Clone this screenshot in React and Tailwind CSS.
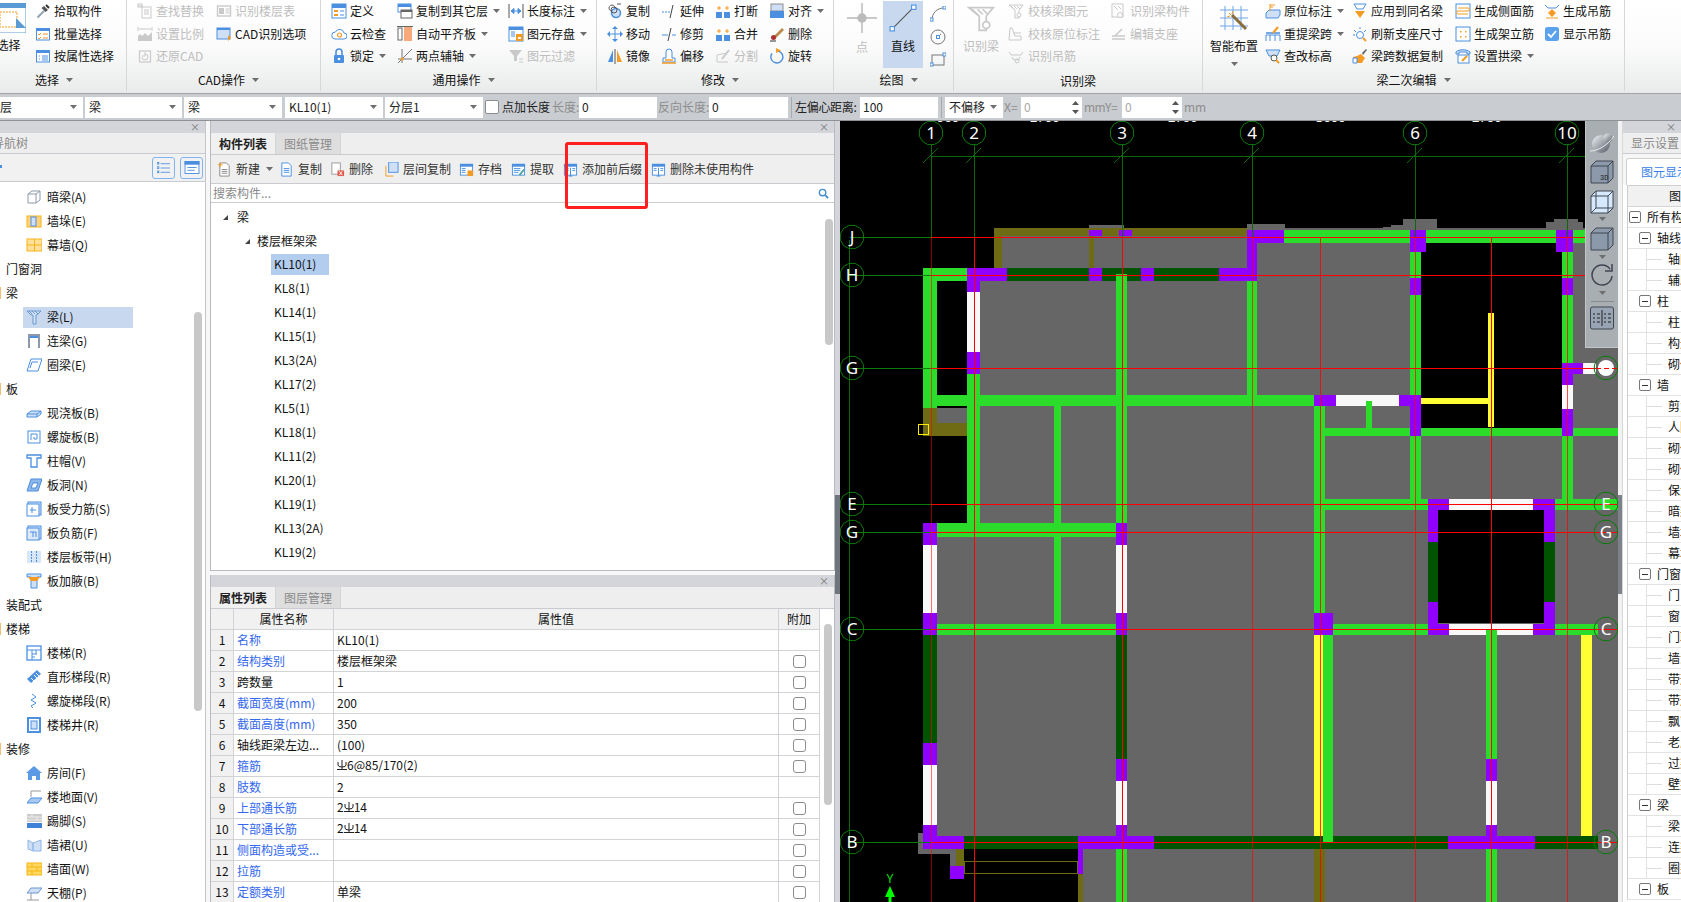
import React from "react";

const B = "#4a8fe0", OR = "#f59a23", GY = "#8c8c8c", DS = "#c9c9c9";
const winIcon = (extra, c = B) => (
  <>
    <rect x="1.5" y="2.5" width="13" height="11.5" fill="#fff" stroke={c} />
    <rect x="1" y="2" width="14" height="3" fill={c} />
    {extra}
  </>
);
const I = {
  pick: <><path d="M2.5 14.5L9 8" stroke="#8fa3b5" strokeWidth="2" /><path d="M9 3l4 4-2.5 2-4-4z" fill="#555" /><path d="M11 2l3 3" stroke="#333" strokeWidth="2" /></>,
  batch: winIcon(<path d="M3 8l1 1 2-2M3 12l1 1 2-2M8 8h5M8 12h5" stroke={OR} fill="none" />, B),
  attr: winIcon(<path d="M4 8h1M4 11h1M7 8h6M7 10h6M7 12h6" stroke={B} />),
  find: <><rect x="5" y="4" width="9" height="11" fill="none" stroke={DS} /><path d="M7 7h5M7 9h5M7 11h5M1 3h5" stroke={DS} /><rect x="1" y="1" width="4" height="3" fill="none" stroke={DS} /></>,
  floorT: <><rect x="1.5" y="3" width="13" height="10" fill="none" stroke={DS} strokeWidth="1.4" /><rect x="3" y="5" width="5" height="6" fill={DS} /><path d="M9.5 6h4M9.5 8h4M9.5 10h4" stroke={DS} /></>,
  scale: <><path d="M1 15h14V6L11 10 8 7l-3 3-2-2-2 2z" fill={DS} /><path d="M2 3h12M1 1v4M15 1v4" stroke={DS} /></>,
  cadopt: <><rect x="1" y="2" width="13" height="11" fill="#cfe0f6" stroke={B} /><rect x="1" y="2" width="13" height="2" fill={B} /><path d="M12 9l3 3-3 3z" fill={OR} /></>,
  restore: <><rect x="2.5" y="3" width="11" height="11" fill="none" stroke={DS} strokeWidth="1.2" /><path d="M5 9a3 3 0 1 0 3-3M8 4v4H5" stroke={DS} fill="none" /></>,
  define: <><rect x="1" y="1" width="14" height="14" fill="#fff" stroke={B} /><rect x="1" y="1" width="14" height="4" fill={B} /><rect x="3" y="7" width="4" height="2" fill={OR} /><rect x="3" y="11" width="4" height="2" fill={OR} /><path d="M9 8h4M9 12h4" stroke={B} /></>,
  cloud: <><path d="M4 13h9a3 3 0 0 0 0-6 4.500 4.500 0 0 0-8.500-1A3.500 3.500 0 0 0 4 13z" fill="#fff" stroke={B} /><circle cx="8.500" cy="9" r="2" fill="none" stroke={OR} strokeWidth="1.2" /></>,
  lock: <><rect x="3" y="7" width="10" height="8" rx="1" fill={B} /><path d="M5 7V4a3 3 0 0 1 6 0v3" stroke={B} strokeWidth="1.6" fill="none" /><circle cx="8" cy="11" r="1.300" fill="#fff" /></>,
  copyF: <><rect x="1" y="1" width="13" height="8" fill="#fff" stroke={B} /><rect x="1" y="1" width="13" height="3" fill={B} /><rect x="4" y="7" width="11" height="8" fill="#fff" stroke="#666" /><rect x="4" y="7" width="11" height="2" fill="#666" /></>,
  align: <><rect x="1" y="2" width="4" height="12" fill="#fff" stroke="#666" /><rect x="7" y="1" width="8" height="14" fill="#f7a97a" /><path d="M0 .5h16" stroke="#666" /></>,
  two: <><path d="M1 11h14M5 1v14M1 15L15 1" stroke="#777" /><circle cx="5" cy="11" r="1.500" fill={OR} /></>,
  len: <><path d="M1 1v14M15 1v14" stroke="#555" /><path d="M3 8h10M3 8l3-2.500v5zM13 8l-3-2.500v5z" fill={B} stroke={B} /></>,
  save: <><rect x="1" y="1" width="14" height="14" fill="#fff" stroke={B} /><rect x="1" y="1" width="14" height="3" fill={B} /><path d="M3 6h4M3 8h4M3 10h4" stroke={B} /><rect x="8" y="8" width="7" height="7" fill={OR} /><rect x="10" y="11" width="3" height="2" fill="#fff" /></>,
  filter: <><path d="M1 2h13L9 8v5H6V8z" fill={DS} /><path d="M11 11h4M11 14h4" stroke={DS} /></>,
  rcopy: <><path d="M2 5a3 3 0 1 1 0 .1M10 1h4" stroke="#555" fill="none" /><circle cx="9" cy="10" r="4.500" fill="#cfe0f6" stroke={B} strokeWidth="1.500" /><circle cx="7" cy="7" r="3" fill="none" stroke="#555" /></>,
  move: <><path d="M8 1v14M1 8h14" stroke={B} /><path d="M8 0l3 3H5zM8 16l3-3H5zM0 8l3-3v6zM16 8l-3-3v6z" fill={B} /></>,
  mirror: <><path d="M1 14L6 2v12z" fill={B} /><path d="M8 1v15" stroke="#555" /><path d="M10 2l5 12h-5z" fill={OR} /></>,
  extend: <><path d="M1 9h9" stroke={B} strokeDasharray="2 1" /><path d="M12 2L9 15" stroke="#444" /></>,
  trim: <><path d="M1 9h6M11 9h4" stroke={B} /><path d="M10 2L7 15" stroke="#444" /></>,
  offset: <><path d="M2 14v-4h3V4a3 3 0 0 1 6 0v6h3v4z" fill="#fff" stroke={B} /><path d="M1 15h14M4 12h8" stroke={OR} strokeWidth="1.300" /></>,
  brk: <><rect x="1" y="9" width="6" height="6" fill={B} /><rect x="9" y="9" width="6" height="6" fill={B} /><path d="M4 3v4M2 5h4M12 3v4M10 5h4" stroke={OR} /></>,
  split: <><path d="M2 14h11M2 14V7l10-2" stroke={DS} fill="none" /><path d="M7 11L14 2" stroke={DS} strokeWidth="2" /></>,
  alignB: <><rect x="2" y="1" width="12" height="7" fill="#cfe0f6" stroke={GY} /><rect x="1" y="8" width="14" height="7" fill={B} /></>,
  del: <><path d="M1 15h6" stroke="#333" /><path d="M4 11L13 2l2 2-9 9z" fill="#b98a4a" /><circle cx="4.500" cy="11.500" r="2.500" fill="#a33" /></>,
  rot: <><path d="M8 3a6 6 0 1 1-5 2.500" stroke={B} fill="none" strokeWidth="1.400" /><path d="M7 0l5 2.500-5 2.500z" fill={OR} /></>,
  dot: <><path d="M0 8h16M8 0v16" stroke={DS} /><circle cx="8" cy="8" r="2.500" fill="#bbb" /></>,
  arc: <><path d="M2 14C2 7 7 2 14 2" stroke="#777" fill="none" /><rect x="0" y="12" width="3" height="3" fill="#fff" stroke={B} /><rect x="13" y="0" width="3" height="3" fill="#fff" stroke={B} /></>,
  circ: <><circle cx="8" cy="8" r="7" fill="none" stroke="#777" /><path d="M8 8L11 5" stroke="#777" /><rect x="6.500" y="6.500" width="3" height="3" fill="#fff" stroke={B} /></>,
  rect: <><rect x="2" y="3" width="12" height="10" fill="none" stroke="#777" /><rect x="0" y="11" width="3" height="3" fill="#fff" stroke={B} /><rect x="13" y="1" width="3" height="3" fill="#fff" stroke={B} /></>,
  ck1: <><path d="M1 2h14l-4 5v8H7V7z" fill="none" stroke={DS} /><path d="M3 3l3 3M6 3l3 3M9 3l3 3" stroke={DS} /><circle cx="11" cy="12" r="2" fill="#fff" stroke={DS} /></>,
  ck2: <><path d="M1 14h12v-4H7L4 2H2z" fill="none" stroke={DS} /><path d="M5 7h8" stroke={DS} /></>,
  ck3: <><path d="M1 4l2 3h10l2-3M4 9a4 3 0 0 0 8 0" stroke={DS} fill="none" /><circle cx="9" cy="13" r="2" fill="none" stroke={DS} /></>,
  ck4: <><rect x="2" y="1" width="11" height="13" fill="none" stroke={DS} /><path d="M4 3l4 4M8 3l3 3" stroke={DS} /><circle cx="10" cy="12" r="2.500" fill="#fff" stroke={DS} /></>,
  ck5: <><path d="M2 10h13M2 13h13M5 10L12 3" stroke={DS} strokeWidth="1.500" /></>,
  orig: <><path d="M1 10l3-3h11v5l-2 3H1z" fill="#cfe0f6" stroke={B} /><path d="M5 1v7M5 2h5M5 4h3" stroke={OR} /></>,
  reDraw: <><path d="M1 15V9h14v6M5 9v6M10 9v6" fill="none" stroke={B} /><path d="M1 7h14" stroke={B} strokeWidth="1.500" /><path d="M8 7l5-6" stroke={OR} strokeWidth="2" /></>,
  chk: <><path d="M1 2h14l-3 6H4z" fill="#cfe0f6" stroke={B} /><circle cx="9" cy="10" r="3" fill="#fff" stroke="#555" /><path d="M11 12l3 3" stroke={OR} strokeWidth="2" /></>,
  apply: <><path d="M2 1h12l-3 5H5z" fill="none" stroke={B} /><path d="M3 8h10l-5 7z" fill={OR} /></>,
  refresh: <><circle cx="8" cy="9" r="3.500" fill="#fff" stroke={B} /><path d="M8 1v2M2 4l2 2M14 4l-2 2M1 9h2" stroke={B} /><path d="M11 12l3 3" stroke={OR} strokeWidth="2" /></>,
  brush: <><path d="M1 15V9l4-1 4-2 4 4-2 3-1 2z" fill={OR} /><path d="M10 5l4-4 1 1-4 5" fill="#666" /><path d="M1 10h4v5H1z" fill="#fff" stroke={B} /></>,
  sideB: <><rect x="1" y="1" width="14" height="14" fill="#fff" stroke={B} /><path d="M3 5h10a1.500 1.500 0 0 1 0 3H3a1.500 1.500 0 0 0 0 3h10" stroke={OR} fill="none" /></>,
  standB: <><rect x="1" y="1" width="14" height="14" fill="#fff" stroke={B} /><path d="M5 5h1.500v1.500H5zM10 5h1.500v1.500H10zM5 10h1.500v1.500H5zM10 10h1.500v1.500H10z" fill={OR} /></>,
  arch: <><path d="M1 4c3-3 11-3 14 0v2h-3V4H4v2H1z" fill="#cfe0f6" stroke={B} /><rect x="3" y="7" width="11" height="8" fill="#fff" stroke={B} /><path d="M7 13l5-5" stroke={OR} strokeWidth="2" /></>,
  hang: <><path d="M1 2l3 3h8l3-3" stroke={B} fill="none" /><path d="M8 6l4 4-4 4-4-4z" fill={OR} /><path d="M2 15h12" stroke={OR} /></>,
  show: <><rect x="1" y="1" width="14" height="14" rx="2.500" fill="#5aa2ee" /><path d="M4 8l3 3 5-6" stroke="#fff" strokeWidth="1.800" fill="none" /></>,
  newI: <><path d="M3 1h7l3 3v11H3z" fill="#fff" stroke="#888" /><path d="M1 3h5M3.500 .5v5" stroke={OR} /><path d="M5 8h6M5 10h6M5 12h6" stroke="#888" /></>,
  copyI: <><path d="M3 1h7l3 3v11H3z" fill="#fff" stroke={B} /><path d="M5 7h6M5 9h6M5 11h6" stroke={B} /></>,
  delI: <><rect x="2" y="1" width="9" height="12" fill="#fff" stroke="#999" /><rect x="8" y="9" width="7" height="6" fill="#e05a4a" /><path d="M10 10l3 4M13 10l-3 4" stroke="#fff" /></>,
  floorC: <><rect x="5" y="0" width="10" height="11" fill="#cfe0f6" stroke={B} /><path d="M2 4v11h8" stroke={OR} fill="none" /></>,
  store: winIcon(<><path d="M3 7h4M3 9h4M3 11h4" stroke={B} /><rect x="9" y="9" width="6" height="6" fill={OR} /></>),
  get: winIcon(<><path d="M3 7h7M3 9h7M3 11h5" stroke={B} /><path d="M9 14l5-6" stroke="#4aa3a3" strokeWidth="2" /></>),
  prefix: winIcon(<><path d="M3 7h3M3 9h3M10 7h3M10 9h3M8 6v9M6 15h4" stroke={B} /></>),
  beamA: <><path d="M2 5l4-3h8v9l-4 3H2z" fill="#fff" stroke="#8c99ab" /><path d="M2 5h8v9M10 5l4-3" stroke="#8c99ab" fill="none" /></>,
  pier: <><rect x="1" y="3" width="14" height="11" fill="#ffd27a" stroke="#f7b416" /><rect x="5" y="4" width="5" height="9" fill="#cfe0f6" stroke={B} /></>,
  curt: <><rect x="1" y="2" width="15" height="12" fill="#ffe09a" stroke="#f7b416" /><path d="M8.500 2v12M1 8h15" stroke="#f7b416" /></>,
  beam: <><path d="M1 2h14l-4 4h-1v9H7V6H5z" fill="#d3e3f7" stroke="#6a97cf" /><path d="M3 2l3 3M6 2l3 3M9 2l3 3" stroke="#6a97cf" /></>,
  lian: <><path d="M3 15V2h10v13" stroke="#8c99ab" strokeWidth="2" fill="none" /><rect x="4" y="3" width="8" height="2" fill={B} /></>,
  ring: <><path d="M1 14L5 2h11l-4 12z" fill="#fff" stroke={B} /><path d="M4 11L6 5h6" stroke={B} fill="none" /></>,
  slab: <><path d="M1 9l4-3h10v3l-4 3H1z" fill="#cfe0f6" stroke={B} /><path d="M1 9h10v3M11 9l4-3" stroke={B} fill="none" /></>,
  spiral: <><rect x="2" y="2" width="12" height="12" fill="none" stroke={B} /><path d="M5 11V5h6v5H8V8" stroke={B} fill="none" /></>,
  cap: <><path d="M1 2h14v3h-4v9H5V5H1z" fill="#fff" stroke={B} strokeWidth="1.300" /></>,
  hole: <><path d="M1 14L5 2h11l-4 12z" fill="#8fb6e8" stroke={B} /><path d="M5 11l2-5h5l-2 5z" fill="#fff" stroke={B} /></>,
  reb: <><rect x="2" y="1" width="13" height="13" fill="#cfe0f6" stroke={B} /><rect x="1" y="3" width="12" height="12" fill="#fff" stroke={B} /><path d="M4 9h6M6 6v6" stroke={B} /></>,
  neg: <><rect x="2" y="1" width="13" height="13" fill="#cfe0f6" stroke={B} /><rect x="1" y="3" width="12" height="12" fill="#dce9f9" stroke={B} /><path d="M4 7h3v5M7 7h3v5" stroke={B} fill="none" /></>,
  band: <><rect x="1" y="2" width="14" height="12" fill="#d7e6f8" /><path d="M5.500 2v12M10.500 2v12" stroke={B} strokeDasharray="2 1" /></>,
  haunch: <><path d="M1 1h14v3h-4v11H5V4H1z" fill="#cfe0f6" stroke={B} /><path d="M2 4h12l-3 4H5z" fill={OR} /></>,
  stair: <><rect x="1" y="1" width="14" height="14" fill="#fff" stroke={B} strokeWidth="1.300" /><path d="M1 5h14M6 5v10M6 9h5M6 12h3M10 5v4" stroke={B} /></>,
  run: <><path d="M1 10L11 1l4 4-10 9z" fill={B} /><path d="M5 9l3 3M8 6l3 3M10 4l3 3" stroke="#fff" /></>,
  helix: <><path d="M6 1l4 3-5 3 5 3-5 3 2 2" stroke={B} fill="none" /></>,
  well: <><rect x="2" y="1" width="12" height="14" fill="#fff" stroke={B} strokeWidth="2" /><rect x="5" y="4" width="6" height="8" fill="#cfe0f6" stroke={B} /></>,
  room: <><path d="M8 1L0 8h2v7h4v-4h4v4h4V8h2z" fill="#5d9ae6" /></>,
  ground: <><path d="M5 8V2h10" stroke="#999" fill="none" /><path d="M1 14l4-5h11l-4 5z" fill="#a9c9f2" stroke={B} /></>,
  skirt: <><rect x="1" y="1" width="15" height="8" fill="#ccc" /><path d="M1 4h15M1 7h15M6 1v3M11 4v3" stroke="#eee" /><rect x="1" y="10" width="15" height="5" fill="#3f82d8" /></>,
  dado: <><path d="M2 3l5 3v8l-5-2zM7 6l8-3v11l-8 0z" fill="#cfe0f6" stroke="#8fb6e8" /></>,
  face: <><rect x="1" y="2" width="15" height="12" fill="#ffd85f" stroke="#f7b416" /><path d="M1 6h15M1 10h15M6 2v4M11 6v4M6 10v4" stroke="#f7b416" /></>,
  ceil: <><path d="M1 8l4-5h11l-4 5z" fill="#cfe0f6" stroke="#6a97cf" /><path d="M5 8v7M1 15h12" stroke="#999" /></>,
};
const Ico = ({ n, cls = "w-[16px] h-[16px]" }) => (
  <svg viewBox="0 0 16 16" className={"shrink-0 " + cls}>{I[n]}</svg>
);
const Tri = () => (
  <svg viewBox="0 0 7 4" className="w-[7px] h-[4px] shrink-0"><path d="M0 0h7L3.500 4z" fill="#6e6e6e" /></svg>
);

const RItem = ({ i, t, arrow, off, gap = "w-[3px]" }) => (
  <div className={"flex items-center h-[22.5px] whitespace-nowrap " + (off ? "text-[#bdbdbd]" : "text-[#111]")}>
    <Ico n={i} />
    <span className={"shrink-0 " + gap} />
    <span>{t}</span>
    {arrow && <span className="ml-[5px]"><Tri /></span>}
  </div>
);
const Col = ({ w, items }) => (
  <div className={"flex flex-col " + w}>
    {items.map((x) => <RItem key={x.t} {...x} />)}
  </div>
);
const Group = ({ w, label, noArrow, children, cls = "", lab = "" }) => (
  <div className={"shrink-0 flex flex-col h-[91px] border-r border-[#d6d8d8] " + w + " " + cls}>
    <div className="flex h-[68px] items-start">{children}</div>
    <div className={"flex-1 flex items-center justify-center gap-[7px] text-[#111] " + lab}>
      <span>{label}</span>
      {!noArrow && <Tri />}
    </div>
  </div>
);

const Ribbon = () => (
  <div className="h-[93px] shrink-0 flex bg-linear-to-b from-white via-[#fbfbfb] to-[#e9ebeb] overflow-hidden">
    <Group w="w-[145px]" cls="-ml-[18px]" label="选择">
      <div className="w-[53px] flex flex-col items-center">
        <svg viewBox="0 0 30 30" className="w-[30px] h-[30px] mt-[3px] ml-[5px]">
          <rect x="0" y="0" width="30" height="30" fill="#fff" stroke="#5b9bd5" />
          <rect x="0" y="0" width="30" height="5" fill="#5b9bd5" />
          <rect x="4" y="9" width="17" height="15" fill="none" stroke={OR} strokeDasharray="2 1" />
          <path d="M20 15l10 10H20z" fill="#5b9bd5" />
        </svg>
        <span className="mt-[4px] text-[#111]">选择</span>
      </div>
      <Col w="w-[90px]" items={[{ i: "pick", t: "拾取构件" }, { i: "batch", t: "批量选择" }, { i: "attr", t: "按属性选择" }]} />
    </Group>
    <Group w="w-[194px]" cls="pl-[10px]" label="CAD操作">
      <Col w="w-[79px]" items={[{ i: "find", t: "查找替换", off: 1 }, { i: "scale", t: "设置比例", off: 1 }, { i: "restore", t: "还原CAD", off: 1 }]} />
      <Col w="w-[95px]" items={[{ i: "floorT", t: "识别楼层表", off: 1 }, { i: "cadopt", t: "CAD识别选项" }]} />
    </Group>
    <Group w="w-[276px]" cls="pl-[10px]" label="通用操作">
      <Col w="w-[66px]" items={[{ i: "define", t: "定义" }, { i: "cloud", t: "云检查" }, { i: "lock", t: "锁定", arrow: 1 }]} />
      <Col w="w-[111px]" items={[{ i: "copyF", t: "复制到其它层", arrow: 1 }, { i: "align", t: "自动平齐板", arrow: 1 }, { i: "two", t: "两点辅轴", arrow: 1 }]} />
      <Col w="w-[80px]" items={[{ i: "len", t: "长度标注", arrow: 1 }, { i: "save", t: "图元存盘", arrow: 1 }, { i: "filter", t: "图元过滤", off: 1 }]} />
    </Group>
    <Group w="w-[237px]" cls="pl-[10px]" label="修改">
      <Col w="w-[54px]" items={[{ i: "rcopy", t: "复制" }, { i: "move", t: "移动" }, { i: "mirror", t: "镜像" }]} />
      <Col w="w-[54px]" items={[{ i: "extend", t: "延伸" }, { i: "trim", t: "修剪" }, { i: "offset", t: "偏移" }]} />
      <Col w="w-[54px]" items={[{ i: "brk", t: "打断" }, { i: "brk", t: "合并" }, { i: "split", t: "分割", off: 1 }]} />
      <Col w="w-[60px]" items={[{ i: "alignB", t: "对齐", arrow: 1 }, { i: "del", t: "删除" }, { i: "rot", t: "旋转" }]} />
    </Group>
    <Group w="w-[120px]" cls="pl-[10px]" label="绘图">
      <div className="w-[36px] flex flex-col items-center text-[#bdbdbd]">
        <Ico n="dot" cls="w-[30px] h-[30px] mt-[3px]" />
        <span className="mt-[6px]">点</span>
      </div>
      <div className="w-[40px] h-[67px] mt-[1px] ml-[3px] bg-[#c7d8ef] flex flex-col items-center">
        <svg viewBox="0 0 26 26" className="w-[28px] h-[28px] mt-[3px]">
          <path d="M3 23L23 3" stroke="#555" />
          <rect x="1" y="21" width="4" height="4" fill="#fff" stroke={B} />
          <rect x="21" y="1" width="4" height="4" fill="#fff" stroke={B} />
        </svg>
        <span className="mt-[6px] text-[#111]">直线</span>
      </div>
      <div className="ml-[7px] flex flex-col pt-[2px]">
        <div className="h-[23px] flex items-center"><Ico n="arc" /></div>
        <div className="h-[23px] flex items-center"><Ico n="circ" /></div>
        <div className="h-[23px] flex items-center"><Ico n="rect" /></div>
      </div>
    </Group>
    <Group w="w-[249px]" label="识别梁" noArrow lab="pt-[3px]">
      <div className="w-[54px] flex flex-col items-center text-[#bdbdbd]">
        <Ico n="ck1" cls="w-[28px] h-[28px] mt-[4px]" />
        <span className="mt-[6px]">识别梁</span>
      </div>
      <Col w="w-[102px]" items={[{ i: "ck1", t: "校核梁图元", off: 1, gap: "w-[4px]" }, { i: "ck2", t: "校核原位标注", off: 1, gap: "w-[4px]" }, { i: "ck3", t: "识别吊筋", off: 1, gap: "w-[4px]" }]} />
      <Col w="w-[90px]" items={[{ i: "ck4", t: "识别梁构件", off: 1, gap: "w-[4px]" }, { i: "ck5", t: "编辑支座", off: 1, gap: "w-[4px]" }]} />
    </Group>
    <Group w="w-[422px]" label="梁二次编辑">
      <div className="w-[62px] flex flex-col items-center text-[#111]">
        <svg viewBox="0 0 30 30" className="w-[30px] h-[30px] mt-[4px]">
          <path d="M6 2v24M14 2v24M22 2v24M1 6h28M1 14h28M1 22h28" stroke="#6ea6e8" />
          <path d="M13 11l14 14" stroke="#8a6d3b" strokeWidth="3" />
          <path d="M10 9l2 2M14 7l-1 3M8 13l3-1" stroke={OR} />
        </svg>
        <span className="mt-[4px]">智能布置</span>
        <span className="mt-[8px]"><Tri /></span>
      </div>
      <Col w="w-[87px]" items={[{ i: "orig", t: "原位标注", arrow: 1 }, { i: "reDraw", t: "重提梁跨", arrow: 1 }, { i: "chk", t: "查改标高" }]} />
      <Col w="w-[103px]" items={[{ i: "apply", t: "应用到同名梁" }, { i: "refresh", t: "刷新支座尺寸" }, { i: "brush", t: "梁跨数据复制" }]} />
      <Col w="w-[89px]" items={[{ i: "sideB", t: "生成侧面筋" }, { i: "standB", t: "生成架立筋" }, { i: "arch", t: "设置拱梁", arrow: 1 }]} />
      <Col w="w-[80px]" items={[{ i: "hang", t: "生成吊筋" }, { i: "show", t: "显示吊筋" }]} />
    </Group>
  </div>
);

const Sel = ({ w, t, cls = "" }) => (
  <div className={"h-[21px] shrink-0 bg-white flex items-center justify-between pl-[4px] pr-[6px] text-[#222] " + w + " " + cls}>
    <span>{t}</span><Tri />
  </div>
);
const Inp = ({ w, t, spin, gray }) => (
  <div className={"h-[21px] shrink-0 bg-white flex items-center justify-between pl-[3px] pr-[3px] " + w + (gray ? " text-[#a8a8a8]" : " text-[#222]")}>
    <span>{t}</span>
    {spin && (
      <span className="flex flex-col gap-[5px]">
        <svg viewBox="0 0 7 4" className="w-[7px] h-[4px]"><path d="M0 4h7L3.500 0z" fill="#555" /></svg>
        <svg viewBox="0 0 7 4" className="w-[7px] h-[4px]"><path d="M0 0h7L3.500 4z" fill="#555" /></svg>
      </span>
    )}
  </div>
);
const OptionBar = () => (
  <div className="h-[27px] shrink-0 flex items-center bg-[#c9ccd0] border-t border-[#a2a4a8] text-[12px] whitespace-nowrap overflow-hidden">
    <Sel w="w-[99px]" cls="-ml-[16px]" t="楼层" />
    <Sel w="w-[97px]" cls="ml-[2px]" t="梁" />
    <Sel w="w-[98px]" cls="ml-[2px]" t="梁" />
    <Sel w="w-[98px]" cls="ml-[3px]" t="KL10(1)" />
    <Sel w="w-[98px]" cls="ml-[2px]" t="分层1" />
    <span className="w-[14px] h-[14px] ml-[2px] rounded-[2px] bg-white border border-[#8c8c8c] shrink-0" />
    <span className="ml-[3px] text-[#222] w-[50px]">点加长度</span>
    <span className="text-[#8e8e8e] w-[27px]">长度:</span>
    <Inp w="w-[78px]" t="0" />
    <span className="ml-[1px] text-[#8e8e8e] w-[51px]">反向长度:</span>
    <Inp w="w-[79px]" t="0" />
    <span className="ml-[3px] w-[1px] h-[21px] bg-[#aaa]" />
    <span className="ml-[3px] text-[#222] w-[65px] tracking-[-0.3px]">左偏心距离:</span>
    <Inp w="w-[78px]" t="100" />
    <span className="ml-[3px] w-[1px] h-[21px] bg-[#aaa]" />
    <Sel w="w-[58px]" cls="ml-[3px]" t="不偏移" />
    <span className="text-[#8e8e8e] w-[18px] pl-[1px]">X=</span>
    <Inp w="w-[61px]" t="0" spin gray />
    <span className="ml-[2px] text-[#8e8e8e] w-[38px] tracking-[-0.5px]">mmY=</span>
    <Inp w="w-[60px]" t="0" spin gray />
    <span className="ml-[2px] text-[#8e8e8e]">mm</span>
  </div>
);

const Strip = () => (
  <div className="h-[12px] shrink-0 bg-[#d3d5da] flex items-center justify-end pr-[5px] text-[10px] leading-none text-[#777]">×</div>
);

const nav = [
  ["beamA", "暗梁(A)"], ["pier", "墙垛(E)"], ["curt", "幕墙(Q)"], [null, "门窗洞"], [null, "梁", 1],
  ["beam", "梁(L)", 0, 1], ["lian", "连梁(G)"], ["ring", "圈梁(E)"], [null, "板", 1], ["slab", "现浇板(B)"],
  ["spiral", "螺旋板(B)"], ["cap", "柱帽(V)"], ["hole", "板洞(N)"], ["reb", "板受力筋(S)"], ["neg", "板负筋(F)"],
  ["band", "楼层板带(H)"], ["haunch", "板加腋(B)"], [null, "装配式"], [null, "楼梯", 1], ["stair", "楼梯(R)"],
  ["run", "直形梯段(R)"], ["helix", "螺旋梯段(R)"], ["well", "楼梯井(R)"], [null, "装修", 1], ["room", "房间(F)"],
  ["ground", "楼地面(V)"], ["skirt", "踢脚(S)"], ["dado", "墙裙(U)"], ["face", "墙面(W)"], ["ceil", "天棚(P)"],
];
const LeftPanel = () => (
  <div className="w-[206px] shrink-0 h-full flex flex-col relative bg-white border-r border-[#c4c6cc] overflow-hidden">
    <Strip />
    <div className="h-[21px] shrink-0 bg-[#eeeeee] border-b border-[#c9cbd1] flex items-center text-[#8a8a8a] -ml-[8px] whitespace-nowrap">导航树</div>
    <div className="h-[28px] shrink-0 bg-[#f1f1f1] border-b border-[#c9cbd1] flex items-center justify-end gap-[5px] pr-[2px] relative">
      <span className="absolute left-0 top-[11px] w-[2px] h-[3px] bg-[#4a8fe0]" />
      <div className="w-[23px] h-[22px] rounded-[3px] border border-[#7fb4ee] flex items-center justify-center">
        <svg viewBox="0 0 16 14" className="w-[14px] h-[12px]"><path d="M4 2h11M4 7h11M4 12h11" stroke={B} /><rect x="0" y="0.500" width="2" height="2" fill="none" stroke={B} /><rect x="0" y="5.500" width="2" height="2" fill="none" stroke={B} /><rect x="0" y="10.500" width="2" height="2" fill="none" stroke={B} /></svg>
      </div>
      <div className="w-[23px] h-[22px] rounded-[3px] border border-[#7fb4ee] flex items-center justify-center">
        <svg viewBox="0 0 16 14" className="w-[16px] h-[13px]"><rect x=".5" y=".5" width="15" height="13" fill="#fff" stroke={B} /><rect x="0" y="0" width="16" height="4" fill={B} /><path d="M3 7h10M3 10h8" stroke={B} /></svg>
      </div>
    </div>
    <div className="flex-1 pt-[3px] overflow-hidden">
      {nav.map(([ic, t, mark, sel]) =>
        ic ? (
          <div key={t} className="h-[24px] flex items-center">
            <div className={"ml-[23px] w-[110px] h-[21px] pl-[3px] flex items-center gap-[5px] whitespace-nowrap text-[#111] " + (sel ? "bg-[#c8d8ef]" : "")}>
              <Ico n={ic} />
              <span>{t}</span>
            </div>
          </div>
        ) : (
          <div key={t} className="h-[24px] flex items-center relative pl-[6px] text-[#111]">
            {mark && <span className="absolute left-0 top-[6px] w-[1px] h-[12px] bg-[#f0c070]" />}
            {t}
          </div>
        )
      )}
    </div>
    <div className="absolute left-[194px] top-[191px] w-[8px] h-[399px] rounded-[4px] bg-[#c8c8c8]" />
  </div>
);

const tb = [
  ["newI", "新建", "w-[62px]", 1], ["copyI", "复制", "w-[51px]"], ["delI", "删除", "w-[54px]"], ["floorC", "层间复制", "w-[75px]"],
  ["store", "存档", "w-[52px]"], ["get", "提取", "w-[52px]"], ["prefix", "添加前后缀", "w-[88px]"], ["prefix", "删除未使用构件", "w-[100px]"],
];
const kls = ["KL10(1)", "KL8(1)", "KL14(1)", "KL15(1)", "KL3(2A)", "KL17(2)", "KL5(1)", "KL18(1)", "KL11(2)", "KL20(1)", "KL19(1)", "KL13(2A)", "KL19(2)"];
const Tab = ({ on, t, w = "w-[65px]" }) => (
  <div className={"h-full flex items-center justify-center border-r border-[#d5d5d5] " + w + " " + (on ? "bg-[#f0f0f0] text-[#222] font-bold" : "bg-[#dedede] text-[#8a8a8a]")}>{t}</div>
);
const TreeTri = () => <svg viewBox="0 0 7 7" className="w-[7px] h-[7px] shrink-0"><path d="M6 1v5H1z" fill="#444" /></svg>;
const TopPanel = () => (
  <div className="h-[450px] shrink-0 flex flex-col bg-white border-l border-b border-[#b8bac0] border-r">
    <Strip />
    <div className="h-[22px] shrink-0 flex bg-[#eeeeee] border-b border-[#c9cbd1]"><Tab on t="构件列表" /><Tab t="图纸管理" /></div>
    <div className="h-[29px] shrink-0 bg-[#efefef] border-b border-[#c9cbd1] pl-[6px] flex items-center text-[#333]">
      {tb.map(([ic, t, w, ar]) => (
        <div key={t} className={"flex items-center whitespace-nowrap shrink-0 " + w}>
          <Ico n={ic} cls="w-[15px] h-[15px]" />
          <span className="ml-[4px]">{t}</span>
          {ar && <span className="ml-[6px]"><Tri /></span>}
        </div>
      ))}
    </div>
    <div className="h-[19px] shrink-0 border-b border-[#c9cbd1] pl-[2px] pr-[5px] flex items-center justify-between text-[#8a8a8a]">
      <span>搜索构件...</span>
      <svg viewBox="0 0 12 12" className="w-[11px] h-[11px]"><circle cx="5" cy="5" r="3.500" fill="none" stroke="#3f8fd0" strokeWidth="1.500" /><path d="M8 8l3 3" stroke="#3f8fd0" strokeWidth="2" /></svg>
    </div>
    <div className="flex-1 relative overflow-hidden text-[#111] pt-[2px]">
      <div className="h-[24px] flex items-center pl-[11px] gap-[8px]"><TreeTri />梁</div>
      <div className="h-[24px] flex items-center pl-[33px] gap-[6px]"><TreeTri />楼层框架梁</div>
      {kls.map((k, idx) => (
        <div key={k} className="h-[22.450px] flex items-center pl-[60px] mb-[1.550px]">
          <span className={"h-[21px] w-[58px] pl-[3px] flex items-center " + (idx === 0 ? "bg-[#b3cdee]" : "")}>{k}</span>
        </div>
      ))}
      <div className="absolute left-[614px] top-[16px] w-[8px] h-[126px] rounded-[4px] bg-[#c8c8c8]" />
    </div>
  </div>
);

const Rebar = () => (
  <svg viewBox="0 0 10 10" className="inline-block w-[10px] h-[10px] mb-[5px]">
    <path d="M1 2v3a4 2 0 0 0 8 0V2M5 0v9M0 9.500h10" stroke="#222" fill="none" />
  </svg>
);
const props = [
  ["名称", 1, "KL10(1)", 0], ["结构类别", 1, "楼层框架梁", 1], ["跨数量", 0, "1", 1], ["截面宽度(mm)", 1, "200", 1],
  ["截面高度(mm)", 1, "350", 1], ["轴线距梁左边...", 0, "(100)", 1],
  ["箍筋", 1, <><Rebar />6@85/170(2)</>, 1], ["肢数", 1, "2", 0],
  ["上部通长筋", 1, <>2<Rebar />14</>, 1], ["下部通长筋", 1, <>2<Rebar />14</>, 1],
  ["侧面构造或受...", 1, "", 1], ["拉筋", 1, "", 1], ["定额类别", 1, "单梁", 1],
];
const cell = "border-r border-b border-[#d2d3d6] flex items-center";
const BottomPanel = () => (
  <div className="flex-1 flex flex-col bg-white border-l border-r border-[#b8bac0] overflow-hidden relative">
    <Strip />
    <div className="h-[22px] shrink-0 flex bg-[#eeeeee] border-b border-[#c9cbd1]"><Tab on t="属性列表" /><Tab t="图层管理" /></div>
    <div className="grid grid-cols-[23px_100px_445px_41px] auto-rows-[21px] w-[609px] text-[#111]">
      <div className={cell + " bg-[#f1f1f1]"} />
      <div className={cell + " bg-[#f1f1f1] justify-center"}>属性名称</div>
      <div className={cell + " bg-[#f1f1f1] justify-center"}>属性值</div>
      <div className={cell + " bg-[#f1f1f1] justify-center"}>附加</div>
      {props.map(([n, blue, v, c], idx) => (
        <React.Fragment key={idx}>
          <div className={cell + " bg-[#f1f1f1] justify-center"}>{idx + 1}</div>
          <div className={cell + " pl-[3px] whitespace-nowrap " + (blue ? "text-[#3468ee]" : "")}>{n}</div>
          <div className={cell + " pl-[3px] whitespace-nowrap"}><span>{v}</span></div>
          <div className={cell + " justify-center"}>
            {c ? <span className="w-[13px] h-[13px] rounded-[3px] border border-[#8c8c8c] bg-white" /> : null}
          </div>
        </React.Fragment>
      ))}
    </div>
    <div className="absolute left-[613px] top-[49px] w-[8px] h-[181px] rounded-[4px] bg-[#c8c8c8]" />
  </div>
);

const CP = { G: "#2bdc2b", D: "#005400", P: "#8f00ff", W: "#f8f8f8", O: "#6f6a14", Y: "#ffff33", K: "#000", A: "#666666" };
const rects = `A 1089 225 1124 230;A 1247 224 1285 230;A 1383 227 1403 230;A 1391 225 1403 227;A 1403 219 1437 230;A 1546 222 1583 230;A 1554 219 1578 222;A 918 833 923 854;A 923 849 950 854;A 950 849 956 866;A 936.700 408 967 423;
K 1421 243 1562 428;K 1438 508 1544 623;
O 994 228 1247 236;O 994 228 1002 268;O 1089 236 1094 268;P 1089 230 1102 236;P 1119 230 1132 236;
G 923 268 967 281;G 923 268 937 408;P 967 268 1007 281;P 967 281 980 292;W 967 292 980 352;P 967 352 980 374;G 967 374 980 523;
D 1007 268 1089 281;P 1089 268 1102 281;D 1102 268 1141 281;P 1141 268 1154 281;D 1154 268 1219 281;P 1219 268 1257 281;P 1247 230 1257 268;P 1247 230 1284 243;
G 1247 281 1257 395;G 1116 274 1127 523;G 923 395 1314 406;G 1054 406 1061 624;O 923 408 937 436;O 923 423 967 436;
G 1284 230 1410 243;P 1410 230 1426 252;G 1426 230 1556 243;P 1556 230 1573 252;G 1573 230 1585 243;
G 1410 252 1421 278;P 1410 278 1421 295;G 1410 295 1421 395;P 1410 395 1421 436;
G 1562 252 1573 278;P 1562 278 1573 295;G 1562 295 1573 363;P 1562 363 1573 385;P 1573 363 1583 374;W 1583 363 1596 374;W 1562 385 1573 409;P 1562 409 1573 436;
P 1314 395 1336 406;W 1336 395 1399 406;P 1399 395 1421 406;G 1314 406 1325 613;G 1366 401 1372 428;
G 1325 428 1410 436;G 1421 428 1562 436;G 1573 428 1618 436;
G 1410 436 1421 499;G 1562 436 1573 499;G 1325 499 1428 510;P 1428 499 1449 510;W 1449 499 1533 510;P 1533 499 1555 510;G 1555 499 1618 510;
P 1428 510 1438 542;D 1428 542 1438 602;P 1428 602 1438 635;P 1544 510 1555 542;D 1544 542 1555 602;P 1544 602 1555 635;
G 937 523 1116 537;P 923 523 937 545;W 923 545 937 613;P 923 613 937 635;D 923 635 937 743;P 923 743 937 765;W 923 765 937 825;P 923 825 937 849;
P 923 836 964 849;D 964 836 1078 849;P 1078 836 1154 849;D 1154 836 1448 849;P 1448 836 1535 849;D 1535 836 1598 849;
P 1116 523 1127 545;W 1116 545 1127 613;P 1116 613 1127 635;D 1116 635 1127 759;P 1116 759 1127 781;W 1116 781 1127 825;P 1116 825 1127 836;G 1116 849 1127 902;
G 937 624 1116 635;G 1333 624 1428 635;P 1428 624 1449 635;W 1449 624 1533 635;P 1533 624 1555 635;G 1555 624 1598 635;P 1314 613 1333 635;
Y 1314 635 1323 836;G 1323 635 1333 842;G 1486 629 1497 759;P 1486 759 1497 781;W 1486 781 1497 825;P 1486 825 1497 836;G 1486 849 1497 902;Y 1581 635 1592 836;O 1314 849 1325 902;
Y 1488 313 1494 427;Y 1421 398 1488 404;
P 950 866 964 879;O 956 849 964 866;P 1078 849 1083 874;O 1078 874 1083 902`
  .split(";")
  .map((s) => s.trim().split(/\s+/));

const Bubble = ({ x, y, t }) => {
  const pts = Array.from({ length: 12 }, (_, i) => {
    const a = (i * Math.PI) / 6 + Math.PI / 12;
    return `${x + 12 * Math.cos(a)},${y + 12 * Math.sin(a)}`;
  }).join(" ");
  return (
    <g>
      <polygon points={pts} fill="none" stroke="#0a7a0a" />
      {t && <text x={x} y={y + 6} textAnchor="middle" fontSize="17" fontFamily="Noto Sans" fill="#fff">{t}</text>}
    </g>
  );
};
const xs = [[931, "1", 0.55], [974, "2", 1], [1122, "3", 1], [1252, "4", 0.65], [1320, "", 0.8], [1415, "6", 0.7], [1491, "", 1], [1567, "10", 0.7]];
const ys = [[237, "J", 1585], [275, "H", 1585], [368, "G", 1618], [504, "E", 1618], [532, "G", 1618], [629, "C", 1618], [842, "B", 1618]];
const Plan = () => (
  <svg viewBox="840 121 778 781" className="block w-[778px] h-[781px] bg-black" shapeRendering="crispEdges">
    <polygon points="994,228 1618,228 1618,902 1078,902 1078,849 923,849 923,523 967,523 967,281 994,268" fill="#666666" />
    {rects.map((r, i) => (
      <rect key={i} x={+r[1]} y={+r[2]} width={r[3] - r[1]} height={r[4] - r[2]} fill={CP[r[0]]} />
    ))}
    <rect x="964.500" y="861.500" width="113" height="12" fill="none" stroke="#6f6a14" />
    <rect x="918.500" y="424.500" width="10" height="10" fill="none" stroke="#ffea00" />
    <path d="M931 156H1585" stroke="#0a6a0a" />
    <path d="M849.500 240V902" stroke="#0a6a0a" />
    {xs.filter((a) => a[1]).map(([x, t]) => (
      <g key={t} shapeRendering="auto">
        <path d={`M${x + 0.5} 145V237`} stroke="#0a6a0a" shapeRendering="crispEdges" />
        <path d={`M${x - 8} 163L${x + 7} 148`} stroke="#0a6a0a" />
        <Bubble x={x} y={133} t={t} />
      </g>
    ))}
    {ys.map(([y, t]) => (
      <g key={y}>
        <path d={`M850 ${y + 0.5}H931`} stroke="#0a7a0a" />
        <g shapeRendering="auto"><Bubble x={852} y={y} t={t} /></g>
      </g>
    ))}
    {xs.map(([x, , o]) => (
      <rect key={x} x={x} y="237" width="1" height="665" fill="#ff0000" opacity={o} />
    ))}
    {ys.map(([y, , e]) => (
      <rect key={y} x="931" y={y} width={e - 931} height="1" fill="#ff0000" />
    ))}
    <g shapeRendering="auto">
      <circle cx="1606" cy="368" r="8" fill="#fff" />
      <path d="M1596 368.500H1618" stroke="#ff0000" strokeDasharray="5 3" />
      <Bubble x={1606} y={368} />
      <Bubble x={1606} y={504} t="E" />
      <Bubble x={1606} y={532} t="G" />
      <Bubble x={1606} y={629} t="C" />
      <Bubble x={1606} y={842} t="B" />
      <path d="M890 886l-5 11h3.500v5h3v-5h3.500z" fill="#00ff00" />
      <text x="890" y="883" textAnchor="middle" fontSize="12" fontFamily="Noto Sans" fill="#00e000">Y</text>
      <g fontFamily="Noto Sans" fontSize="13" fill="#fff">
        <text x="937" y="122">900</text>
        <text x="1030" y="122">2700</text>
        <text x="1168" y="122">2700</text>
        <text x="1316" y="122">3000</text>
        <text x="1472" y="122">2700</text>
      </g>
    </g>
  </svg>
);

const Cube = ({ fill, label, inner }) => (
  <svg viewBox="0 0 24 24" className="w-[24px] h-[24px] mt-[6px]">
    <path d="M1 6l5-5h17v17l-5 5H1z" fill={fill} stroke="#3f4650" />
    <path d="M1 6h17v17M18 6l5-5" stroke="#3f4650" fill="none" />
    {inner && <path d="M6 1v17h17M1 23l5-5" stroke="#3f4650" fill="none" />}
    {label && <text x="10" y="20" fontSize="7" fontFamily="Liberation Mono" fill="#222">{label}</text>}
  </svg>
);
const Palette = () => (
  <div className="absolute right-0 top-0 w-[33px] h-[227px] bg-[#a9aeb3] border-l border-b border-[#c3c6c9] flex flex-col items-center pt-[11px]">
    <svg viewBox="0 0 24 22" className="w-[24px] h-[22px]">
      <defs><linearGradient id="sp" x1="0" y1="0" x2="1" y2="1"><stop offset="0" stopColor="#f4f6f8" /><stop offset="1" stopColor="#4f5863" /></linearGradient></defs>
      <circle cx="11" cy="12" r="9" fill="url(#sp)" />
      <circle cx="18" cy="6" r="4.500" fill="url(#sp)" />
      <path d="M0 19C8 19 18 13 24 4" stroke="#e8eaec" fill="none" />
    </svg>
    <Cube fill="#8c99ab" label="3D" />
    <Cube fill="#d6e8fb" inner />
    <span className="mt-[3px]"><Tri /></span>
    <Cube fill="#8c99ab" />
    <span className="mt-[4px]"><Tri /></span>
    <svg viewBox="0 0 24 24" className="w-[24px] h-[24px] mt-[4px]"><path d="M20 6a10 10 0 1 0 2 7" stroke="#3f4650" fill="none" strokeWidth="1.500" /><path d="M22 1v7h-7" stroke="#3f4650" fill="none" strokeWidth="1.500" /></svg>
    <span className="mt-[4px]"><Tri /></span>
    <span className="w-[23px] h-[1px] bg-[#878b90] mt-[6px]" />
    <svg viewBox="0 0 24 24" className="w-[24px] h-[24px] mt-[4px]"><rect x=".5" y="1" width="23" height="22" rx="2" fill="#98a3b3" stroke="#3f4650" /><path d="M12 4v16M3 8h2M3 12h2M3 16h2M7 8h3M7 12h3M7 16h3M14 8h2M14 12h2M14 16h2M18 8h3M18 12h3M18 16h3" stroke="#222" /></svg>
  </div>
);

const tree = [
  [0, "所有构件", 1], [1, "轴线", 1], [2, "轴网"], [2, "辅助轴线"], [1, "柱", 1], [2, "柱"], [2, "构造柱"], [2, "砌体柱"], [1, "墙", 1],
  [2, "剪力墙"], [2, "人防门框墙"], [2, "砌体墙"], [2, "砌体加筋"], [2, "保温层"], [2, "暗梁"], [2, "墙垛"], [2, "幕墙"], [1, "门窗洞", 1],
  [2, "门"], [2, "窗"], [2, "门联窗"], [2, "墙洞"], [2, "带形窗"], [2, "带形洞"], [2, "飘窗"], [2, "老虎窗"], [2, "过梁"], [2, "壁龛"],
  [1, "梁", 1], [2, "梁"], [2, "连梁"], [2, "圈梁"], [1, "板", 1],
];
const Minus = () => (
  <span className="w-[12px] h-[12px] rounded-[2px] border border-[#777] flex items-center justify-center shrink-0">
    <span className="w-[6px] h-[1px] bg-[#333]" />
  </span>
);
const RightPanel = () => (
  <div className="flex-1 h-full flex flex-col bg-white border-l border-[#d8d8d8] overflow-hidden whitespace-nowrap">
    <Strip />
    <div className="h-[21px] shrink-0 bg-[#eeeeee] border-b border-[#c9cbd1] flex items-center pl-[8px] text-[#8a8a8a]">显示设置</div>
    <div className="h-[31px] shrink-0 pl-[3px] pt-[4px] bg-[#f6f6f6]">
      <div className="h-[27px] w-[80px] bg-white border border-b-0 border-[#d0d0d0] rounded-t-[3px] pl-[14px] flex items-center text-[#3a82e6]">图元显示</div>
    </div>
    <div className="ml-[4px] border-l border-t border-[#cfcfcf]">
      <div className="h-[21px] bg-[#f1f1f1] border-b border-[#d4d4d4] pl-[41px] flex items-center text-[#111]">图元</div>
      {tree.map(([lv, t], i) => (
        <div key={i} className="h-[21px] border-b border-[#e2e2e2] flex items-center text-[#111]">
          {lv === 0 && <span className="ml-[1px] mr-[6px] flex"><Minus /></span>}
          {lv === 1 && <span className="ml-[11px] mr-[6px] flex"><Minus /></span>}
          {lv === 2 && (
            <>
              <span className="ml-[18px] self-stretch w-[1px] bg-[#e2e2e2] shrink-0" />
              <span className="mr-[6px] w-[15px] h-[1px] bg-[#dedede] shrink-0" />
            </>
          )}
          <span>{t}</span>
        </div>
      ))}
    </div>
  </div>
);

export default function App() {
  return (
    <div className="w-[1681px] h-[902px] overflow-hidden flex flex-col bg-[#f7f7f7] text-[12px] leading-[16px] [font-family:'Noto_Sans_CJK_SC','Liberation_Sans',sans-serif]">
      <Ribbon />
      <OptionBar />
      <div className="h-[1px] shrink-0 bg-[#8e9297]" />
      <div className="flex-1 flex min-h-0">
        <LeftPanel />
        <div className="w-[4px] shrink-0" />
        <div className="w-[625px] shrink-0 h-full flex flex-col relative">
          <TopPanel />
          <div className="h-[4px] shrink-0" />
          <BottomPanel />
          <div className="absolute left-[355px] top-[21px] w-[83px] h-[67px] border-[3px] border-[#ff1f1f] rounded-[3px]" />
        </div>
        <div className="w-[5px] shrink-0 bg-[#d3d5da] pt-[374px]">
          <div className="h-[99px] bg-[#6f757c]" />
        </div>
        <div className="w-[778px] shrink-0 h-full relative overflow-hidden">
          <Plan />
          <Palette />
        </div>
        <div className="w-[4px] shrink-0 bg-[#f2f2f2] pt-[374px]">
          <div className="h-[99px] bg-[#7c8289]" />
        </div>
        <RightPanel />
      </div>
    </div>
  );
}
